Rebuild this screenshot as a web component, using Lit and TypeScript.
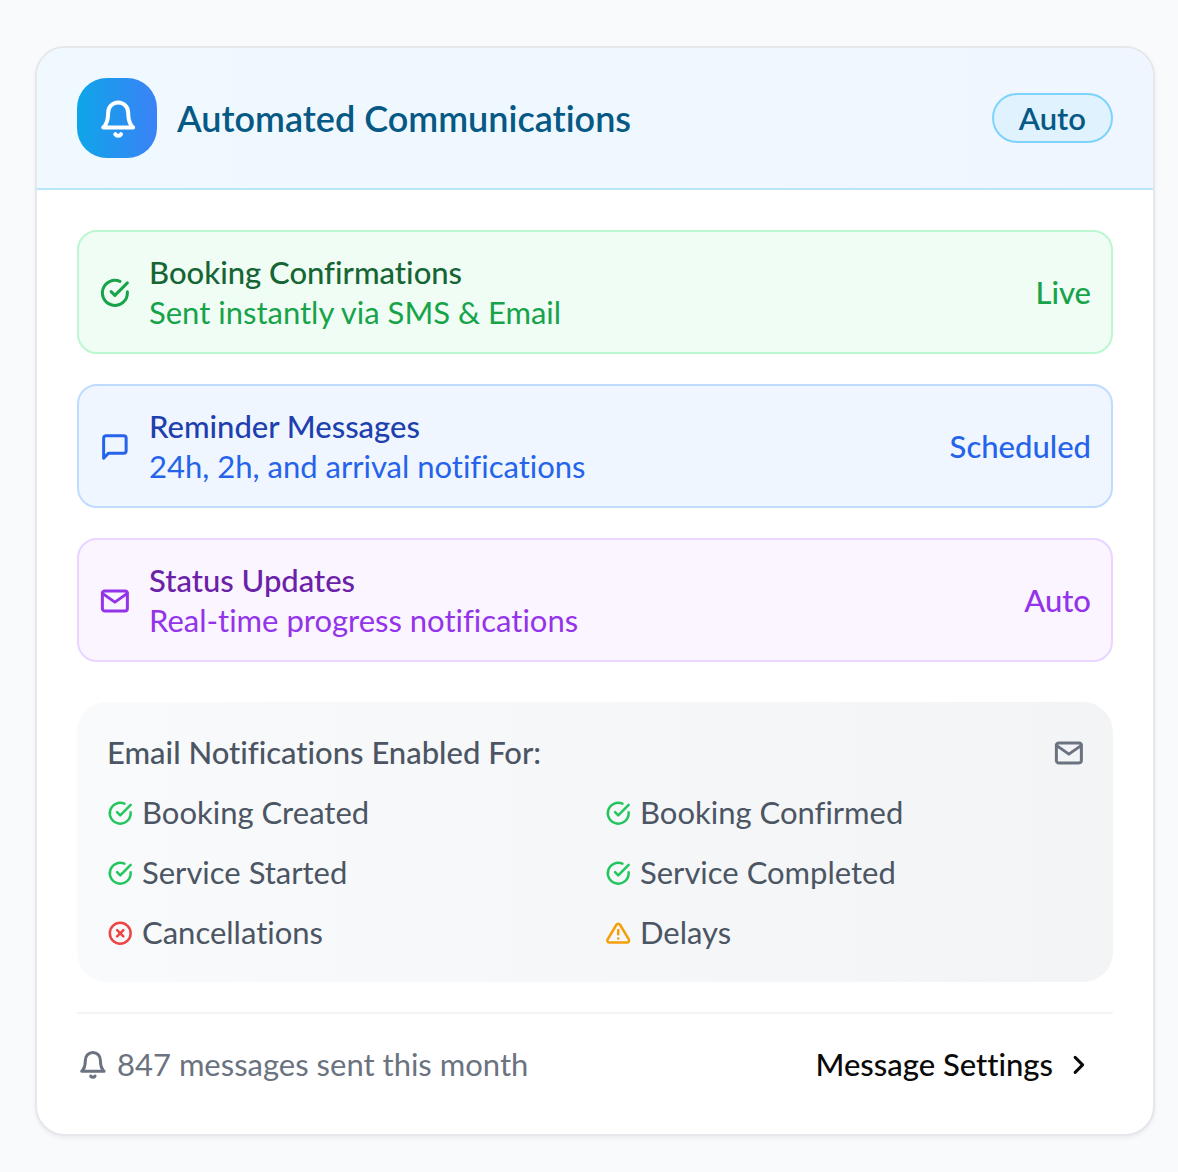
import { LitElement, html, css, svg, type SVGTemplateResult } from "lit";
import { customElement, property } from "lit/decorators.js";
import { classMap } from "lit/directives/class-map.js";

const glyphs: Record<string, SVGTemplateResult> = {
  bell: svg`<path d="M18 8A6 6 0 0 0 6 8c0 7-3 9-3 9h18s-3-2-3-9"/><path d="M13.73 21a2 2 0 0 1-3.46 0"/>`,
  check: svg`<path d="M22 11.08V12a10 10 0 1 1-5.93-9.14"/><path d="M22 4 12 14.01l-3-3"/>`,
  message: svg`<path d="M21 15a2 2 0 0 1-2 2H7l-4 4V5a2 2 0 0 1 2-2h14a2 2 0 0 1 2 2z"/>`,
  mail: svg`<path d="M4 4h16a2 2 0 0 1 2 2v12a2 2 0 0 1-2 2H4a2 2 0 0 1-2-2V6a2 2 0 0 1 2-2z"/><path d="m22 6-10 7L2 6"/>`,
  cross: svg`<circle cx="12" cy="12" r="10"/><path d="m15 9-6 6"/><path d="m9 9 6 6"/>`,
  warning: svg`<path d="M10.29 3.86 1.82 18a2 2 0 0 0 1.71 3h16.94a2 2 0 0 0 1.71-3L13.71 3.86a2 2 0 0 0-3.42 0z"/><path d="M12 9v4"/><path d="M12 17h.01"/>`,
  chevron: svg`<path d="m9 18 6-6-6-6"/>`,
};

@customElement("line-icon")
class LineIcon extends LitElement {
  @property() name = "bell";

  static styles = css`
    :host {
      display: block;
      flex: none;
      width: 30px;
      height: 30px;
    }
    svg {
      display: block;
      width: 100%;
      height: 100%;
      overflow: visible;
      fill: none;
      stroke: currentColor;
      stroke-width: 2.4;
      stroke-linecap: round;
      stroke-linejoin: round;
    }
  `;

  render() {
    return html`<svg viewBox="-0.7 -0.7 24 24" aria-hidden="true">${glyphs[this.name]}</svg>`;
  }
}

const channels = [
  { tone: "green", icon: "check", title: "Booking Confirmations", note: "Sent instantly via SMS & Email", status: "Live" },
  { tone: "blue", icon: "message", title: "Reminder Messages", note: "24h, 2h, and arrival notifications", status: "Scheduled" },
  { tone: "purple", icon: "mail", title: "Status Updates", note: "Real-time progress notifications", status: "Auto" },
];

const events = [
  { icon: "check", label: "Booking Created" },
  { icon: "check", label: "Booking Confirmed" },
  { icon: "check", label: "Service Started" },
  { icon: "check", label: "Service Completed" },
  { icon: "cross", label: "Cancellations" },
  { icon: "warning", label: "Delays" },
];

@customElement("app-root")
class AppRoot extends LitElement {
  static styles = css`
    :host {
      display: block;
      box-sizing: border-box;
      min-height: 100vh;
      padding: 46px 23px 36px 35px;
      background: #f9fafc;
      font-family: Lato, "Open Sans", sans-serif;
      font-size: 31px;
      line-height: 40px;
      font-variant-ligatures: none;
    }
    *,
    *::before {
      box-sizing: border-box;
    }
    h2,
    h3,
    p,
    ul {
      margin: 0;
      padding: 0;
      font: inherit;
      font-variant-ligatures: none;
      list-style: none;
    }
    .card {
      border: 2px solid #e5e7eb;
      border-radius: 30px;
      background: #fff;
      box-shadow: 0 2px 4px rgba(0, 0, 0, 0.06);
      overflow: hidden;
    }
    .head {
      display: flex;
      align-items: center;
      gap: 20px;
      padding: 30px 40px;
      border-bottom: 2px solid #bae6fd;
      background: linear-gradient(90deg, #f0f9ff, #eff6ff);
      color: #075985;
    }
    .tile {
      display: grid;
      place-items: center;
      width: 80px;
      height: 80px;
      border-radius: 30px;
      background: linear-gradient(90deg, #0ea5e9, #3b82f6);
      color: #fff;
    }
    .tile line-icon {
      width: 40px;
      height: 40px;
    }
    .head .title {
      flex: 1;
      font-size: 36px;
      font-weight: 600;
    }
    .badge {
      padding: 3px 25px;
      border: 2px solid #7dd3fc;
      border-radius: 25px;
      background: #e0f2fe;
      font-weight: 600;
    }
    .body {
      padding: 40px;
    }
    .channels {
      display: grid;
      gap: 30px;
    }
    .channel {
      display: flex;
      align-items: center;
      gap: 20px;
      padding: 20px;
      border: 2px solid;
      border-radius: 20px;
    }
    .text {
      flex: 1;
    }
    .name,
    .status,
    .caption {
      font-weight: 500;
    }
    .green {
      border-color: #bbf7d0;
      background: #f0fdf4;
      color: #16a34a;
    }
    .green .name {
      color: #166534;
    }
    .blue {
      border-color: #bfdbfe;
      background: #eff6ff;
      color: #2563eb;
    }
    .blue .name {
      color: #1e40af;
    }
    .purple {
      border-color: #e9d5ff;
      background: #faf5ff;
      color: #9333ea;
    }
    .purple .name {
      color: #6b21a8;
    }
    .panel {
      margin-top: 40px;
      padding: 30px;
      border-radius: 30px;
      background: linear-gradient(90deg, #f9fafb, #f3f4f6);
      color: #4b5563;
    }
    .panel-head {
      display: flex;
      align-items: center;
      justify-content: space-between;
      margin-bottom: 20px;
    }
    .panel-head line-icon {
      color: #6b7280;
    }
    .events {
      display: grid;
      grid-template-columns: 1fr 1fr;
      gap: 20px;
    }
    .event {
      display: flex;
      align-items: center;
      gap: 10px;
    }
    .event line-icon {
      width: 25px;
      height: 25px;
    }
    .check {
      color: #22c55e;
    }
    .cross {
      color: #ef4444;
    }
    .warning {
      color: #f59e0b;
    }
    .foot {
      display: flex;
      align-items: center;
      justify-content: space-between;
      margin-top: 30px;
      padding-top: 20px;
      border-top: 2px solid #f3f4f6;
    }
    .total {
      display: flex;
      align-items: center;
      gap: 10px;
      color: #6b7280;
    }
    .settings {
      display: flex;
      align-items: center;
      gap: 10px;
      padding: 10px 20px;
      border: 0;
      border-radius: 20px;
      background: none;
      color: #0a0a0a;
      font: inherit;
      font-variant-ligatures: none;
      font-weight: 500;
      cursor: pointer;
    }
  `;

  render() {
    return html`
      <section class="card">
        <header class="head">
          <div class="tile"><line-icon name="bell"></line-icon></div>
          <h2 class="title">Automated Communications</h2>
          <span class="badge">Auto</span>
        </header>
        <div class="body">
          <ul class="channels">
            ${channels.map(
              (c) => html`
                <li class=${classMap({ channel: true, [c.tone]: true })}>
                  <line-icon name=${c.icon}></line-icon>
                  <div class="text">
                    <h3 class="name">${c.title}</h3>
                    <p>${c.note}</p>
                  </div>
                  <span class="status">${c.status}</span>
                </li>
              `,
            )}
          </ul>
          <section class="panel">
            <div class="panel-head">
              <h3 class="caption">Email Notifications Enabled For:</h3>
              <line-icon name="mail"></line-icon>
            </div>
            <ul class="events">
              ${events.map(
                (e) => html`
                  <li class="event">
                    <line-icon class=${e.icon} name=${e.icon}></line-icon>
                    <span>${e.label}</span>
                  </li>
                `,
              )}
            </ul>
          </section>
          <footer class="foot">
            <p class="total"><line-icon name="bell"></line-icon><span>847 messages sent this month</span></p>
            <button class="settings" type="button">
              <span>Message Settings</span>
              <line-icon name="chevron"></line-icon>
            </button>
          </footer>
        </div>
      </section>
    `;
  }
}
